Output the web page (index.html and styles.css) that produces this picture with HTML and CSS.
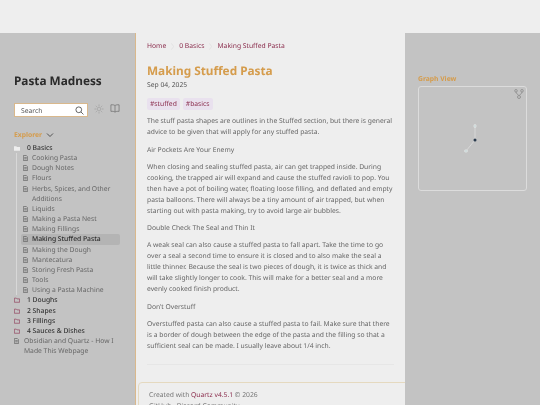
FILE: index.html
```html
<!DOCTYPE html>
<html lang="en">
<head>
<meta charset="utf-8">
<title>Making Stuffed Pasta</title>
<link rel="stylesheet" href="styles.css">
</head>
<body>
<div class="page">
  <aside class="left">
    <h2 class="site">Pasta Madness</h2>
    <div class="tools">
      <div class="search"><span>Search</span>
        <svg width="9" height="9" viewBox="0 0 10 10" fill="none" stroke="#444" stroke-width="0.9"><circle cx="4.2" cy="4.2" r="3.2"/><path d="M6.6 6.6L9.4 9.4"/></svg>
      </div>
      <svg class="ico" width="10" height="10" viewBox="0 0 12 12" fill="none" stroke="#999" stroke-width="0.7"><circle cx="6" cy="6" r="2.2"/><path d="M6 .5v2M6 9.5v2M.5 6h2M9.5 6h2M2.1 2.1l1.4 1.4M8.5 8.5l1.4 1.4M2.1 9.9l1.4-1.4M8.5 3.5l1.4-1.4"/></svg>
      <svg class="ico" width="10" height="9" viewBox="0 0 12 11" fill="none" stroke="#666" stroke-width="0.8"><path d="M6 2C5 1 3 .8 1 1v8c2-.2 4 0 5 1 1-1 3-1.200 5-1V1C9 .8 7 1 6 2zM6 2v8"/></svg>
    </div>
    <div class="explorer"><span>Explorer</span>
      <svg width="8" height="6" viewBox="0 0 8 6" fill="none" stroke="#444" stroke-width="0.9"><path d="M1 1.500l3 3 3-3"/></svg>
    </div>
    <ul class="tree">
      <li class="folder"><svg class="fold open" viewBox="0 0 8 7"><path d="M0 1h3l1 1h4v5H0z"/></svg><span>0 Basics</span></li>
      <li>
        <ul class="sub">
          <li><svg class="doc" viewBox="0 0 6 7"><path d="M.5.500h3.500l1.500 1.500v4.500h-5zM1.500 3h3M1.500 4.500h3"/></svg><span>Cooking Pasta</span></li>
          <li><svg class="doc" viewBox="0 0 6 7"><path d="M.5.500h3.500l1.500 1.500v4.500h-5zM1.500 3h3M1.500 4.500h3"/></svg><span>Dough Notes</span></li>
          <li><svg class="doc" viewBox="0 0 6 7"><path d="M.5.500h3.500l1.500 1.500v4.500h-5zM1.500 3h3M1.500 4.500h3"/></svg><span>Flours</span></li>
          <li><svg class="doc" viewBox="0 0 6 7"><path d="M.5.500h3.500l1.500 1.500v4.500h-5zM1.500 3h3M1.500 4.500h3"/></svg><span>Herbs, Spices, and Other Additions</span></li>
          <li><svg class="doc" viewBox="0 0 6 7"><path d="M.5.500h3.500l1.500 1.500v4.500h-5zM1.500 3h3M1.500 4.500h3"/></svg><span>Liquids</span></li>
          <li><svg class="doc" viewBox="0 0 6 7"><path d="M.5.500h3.500l1.500 1.500v4.500h-5zM1.500 3h3M1.500 4.500h3"/></svg><span>Making a Pasta Nest</span></li>
          <li><svg class="doc" viewBox="0 0 6 7"><path d="M.5.500h3.500l1.500 1.500v4.500h-5zM1.500 3h3M1.500 4.500h3"/></svg><span>Making Fillings</span></li>
          <li class="active"><svg class="doc" viewBox="0 0 6 7"><path d="M.5.500h3.500l1.500 1.500v4.500h-5zM1.500 3h3M1.500 4.500h3"/></svg><span>Making Stuffed Pasta</span></li>
          <li><svg class="doc" viewBox="0 0 6 7"><path d="M.5.500h3.500l1.500 1.500v4.500h-5zM1.500 3h3M1.500 4.500h3"/></svg><span>Making the Dough</span></li>
          <li><svg class="doc" viewBox="0 0 6 7"><path d="M.5.500h3.500l1.500 1.500v4.500h-5zM1.500 3h3M1.500 4.500h3"/></svg><span>Mantecatura</span></li>
          <li><svg class="doc" viewBox="0 0 6 7"><path d="M.5.500h3.500l1.500 1.500v4.500h-5zM1.500 3h3M1.500 4.500h3"/></svg><span>Storing Fresh Pasta</span></li>
          <li><svg class="doc" viewBox="0 0 6 7"><path d="M.5.500h3.500l1.500 1.500v4.500h-5zM1.500 3h3M1.500 4.500h3"/></svg><span>Tools</span></li>
          <li><svg class="doc" viewBox="0 0 6 7"><path d="M.5.500h3.500l1.500 1.500v4.500h-5zM1.500 3h3M1.500 4.500h3"/></svg><span>Using a Pasta Machine</span></li>
        </ul>
      </li>
      <li class="folder"><svg class="fold" viewBox="0 0 8 7"><path d="M.5 1h2.500l1 1h3.500v4.500h-7z"/></svg><span>1 Doughs</span></li>
      <li class="folder"><svg class="fold" viewBox="0 0 8 7"><path d="M.5 1h2.500l1 1h3.500v4.500h-7z"/></svg><span>2 Shapes</span></li>
      <li class="folder"><svg class="fold" viewBox="0 0 8 7"><path d="M.5 1h2.500l1 1h3.500v4.500h-7z"/></svg><span>3 Fillings</span></li>
      <li class="folder"><svg class="fold" viewBox="0 0 8 7"><path d="M.5 1h2.500l1 1h3.500v4.500h-7z"/></svg><span>4 Sauces &amp; Dishes</span></li>
      <li class="root"><svg class="doc" viewBox="0 0 6 7"><path d="M.5.500h3.500l1.500 1.500v4.500h-5zM1.500 3h3M1.500 4.500h3"/></svg><span>Obsidian and Quartz - How I Made This Webpage</span></li>
    </ul>
  </aside>
  <main class="center">
    <nav class="crumbs"><a>Home</a><svg class="sep" width="3" height="7" viewBox="0 0 3 7" fill="none" stroke="#dedede" stroke-width="0.7"><path d="M.3.300L2.700 3.500.3 6.700"/></svg><a>0 Basics</a><svg class="sep" width="3" height="7" viewBox="0 0 3 7" fill="none" stroke="#dedede" stroke-width="0.7"><path d="M.3.300L2.700 3.500.3 6.700"/></svg><a>Making Stuffed Pasta</a></nav>
    <h1>Making Stuffed Pasta</h1>
    <p class="date">Sep 04, 2025</p>
    <div class="tags"><a>#stuffed</a><a>#basics</a></div>
    <article>
      <p>The stuff pasta shapes are outlines in the Stuffed section, but there is general advice to be given that will apply for any stuffed pasta.</p>
      <p>Air Pockets Are Your Enemy</p>
      <p>When closing and sealing stuffed pasta, air can get trapped inside. During cooking, the trapped air will expand and cause the stuffed ravioli to pop. You then have a pot of boiling water, floating loose filling, and deflated and empty pasta balloons. There will always be a tiny amount of air trapped, but when starting out with pasta making, try to avoid large air bubbles.</p>
      <p>Double Check The Seal and Thin It</p>
      <p>A weak seal can also cause a stuffed pasta to fall apart. Take the time to go over a seal a second time to ensure it is closed and to also make the seal a little thinner. Because the seal is two pieces of dough, it is twice as thick and will take slightly longer to cook. This will make for a better seal and a more evenly cooked finish product.</p>
      <p>Don’t Overstuff</p>
      <p>Overstuffed pasta can also cause a stuffed pasta to fail. Make sure that there is a border of dough between the edge of the pasta and the filling so that a sufficient seal can be made. I usually leave about 1/4 inch.</p>
    </article>
    <hr>
    <footer>
      <p>Created with <a>Quartz v4.5.1</a> © 2026</p>
      <p>GitHub &nbsp; Discord Community</p>
    </footer>
  </main>
  <aside class="right">
    <h3>Graph View</h3>
    <div class="graph">
      <svg class="gicon" width="10" height="10" viewBox="0 0 10 10" fill="none" stroke="#8a8a8a" stroke-width="0.8"><circle cx="2" cy="1.800" r="1.300"/><circle cx="8" cy="1.800" r="1.300"/><circle cx="5" cy="8" r="1.500"/><path d="M2 3.100C2 5 4 5 5 6.500 6 5 8 5 8 3.100"/></svg>
      <svg class="net" width="107" height="103" viewBox="0 0 107 103"><path d="M56 39V53M56 53L47 64" stroke="#dcdcdc" stroke-width="0.8"/><ellipse cx="56" cy="39" rx="1.200" ry="1.600" fill="#c6d6d6" stroke="#eee" stroke-width="0.5"/><circle cx="56" cy="53" r="1.500" fill="#2b3b4e"/><ellipse cx="47" cy="64" rx="1.600" ry="1.200" fill="#c6d6d6" stroke="#eee" stroke-width="0.5"/></svg>
    </div>
  </aside>
</div>
</body>
</html>
```
FILE: styles.css
```css
* { box-sizing: border-box; }
html, body { margin: 0; height: 405px; overflow: hidden; }
body { background: #eeeeee; font-family: "Noto Sans", sans-serif; color: #666; text-rendering: geometricPrecision; }
.page { display: grid; grid-template-columns: 135px 270px 135px; height: 405px; padding-top: 33px; filter: blur(0.3px); will-change: transform; }
a { color: #8a2c4c; }
.left { background: #c3c3c3; padding: 40px 0 0 14px; overflow: hidden; }
.right { background: #c3c3c3; padding: 41px 13px 0 13px; }
.site { margin: 0; font-size: 11.800px; line-height: 17px; font-weight: 700; color: #2b2b2b; }
.tools { display: flex; align-items: flex-start; margin-top: 13px; gap: 6px; height: 14px; }
.search { width: 74px; height: 14px; background: #fff; border: 1px solid #d9b88c; display: flex; align-items: center; justify-content: space-between; padding: 0 3px 0 6px; font-size: 6.750px; color: #555; }
.ico { margin-top: 1px; }
.explorer { display: flex; align-items: center; gap: 4px; margin-top: 12px; font-size: 6.750px; font-weight: 700; color: #d59c4c; line-height: 11px; }
.tree, .sub { list-style: none; margin: 0; padding: 0; font-size: 6.750px; line-height: 10.150px; }
.tree { margin-top: 3px; width: 108px; }
.tree li { display: flex; }
.tree > li:nth-child(2) { display: block; }
.folder { color: #333; font-weight: 500; }
.folder span { margin-left: 7px; }
.fold { width: 6px; height: 6px; margin: 2px 0 0 0; flex: none; fill: none; stroke: #8a2c4c; stroke-width: 0.8; }
.fold.open { fill: #eee; stroke: none; }
.sub { margin-left: 2px; border-left: 1px solid #d8d8d8; padding-left: 5px; }
.sub li { color: #666; padding-left: 1px; border-radius: 2px; }
.doc { width: 5px; height: 6px; margin: 2px 5px 0 0; flex: none; fill: none; stroke: #555; stroke-width: 0.7; }
.sub .doc { margin-right: 4px; }
.sub li.active { background: #b4b4b4; color: #2b2b2b; font-weight: 500; width: 99px; margin-left: -1px; padding-left: 2px; }
.root { color: #666; }
.center { border-left: 1px solid #d9b88c; padding: 8px 11px 0 11px; overflow: hidden; }
.crumbs { display: flex; align-items: center; font-size: 6.750px; line-height: 10px; gap: 5px; }
h1 { margin: 12px 0 0; font-size: 11.800px; line-height: 17px; font-weight: 700; color: #d59c4c; }
.date { margin: 0; font-size: 6.750px; line-height: 10px; color: #555; }
.tags { display: flex; gap: 3px; margin-top: 8px; }
.tags a { background: #e9e1ee; border-radius: 2px; padding: 0 3px; font-size: 6.750px; line-height: 12px; }
article p { margin: 6.300px 0 0; font-size: 6.750px; line-height: 11px; color: #666; }
article { margin-top: -1px; }
hr { border: 0; border-top: 1px solid #e6e6e6; margin: 13px 0 0; }
footer { margin: 17px -9px 0 -9px; width: 280px; border: 1px solid #e5d9bf; border-radius: 4px 0 0 0; padding: 6px 10px; font-size: 6.750px; line-height: 11px; color: #777; }
footer p { margin: 0; }
.right h3 { margin: 0; font-size: 6.750px; line-height: 10px; font-weight: 700; color: #d59c4c; }
.graph { position: relative; margin-top: 2px; width: 109px; height: 105px; border: 1px solid #dcdcdc; border-radius: 3px; }
.gicon { position: absolute; right: 2px; top: 2px; }
.net { display: block; }
```
